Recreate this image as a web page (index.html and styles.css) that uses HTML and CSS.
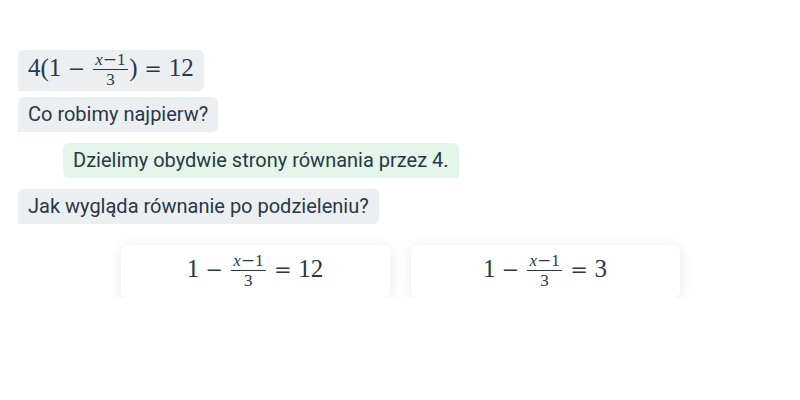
FILE: index.html
```html
<!DOCTYPE html>
<html lang="pl">
<head>
  <meta charset="UTF-8">
  <title>Równanie</title>
  <link rel="stylesheet" href="styles.css">
</head>
<body>
  <div class="chat">
    <div class="bubble bot math-bubble">
      <span class="math">4(1<span class="bin">&minus;</span><span class="frac"><span class="num"><i>x</i><span class="op">&minus;</span>1</span><span class="den">3</span></span>)<span class="rel">=</span>12</span>
    </div>
    <div class="bubble bot">Co robimy najpierw?</div>
    <div class="bubble user">Dzielimy obydwie strony równania przez 4.</div>
    <div class="bubble bot">Jak wygląda równanie po podzieleniu?</div>
  </div>

  <div class="choices">
    <div class="choice">
      <span class="math">1<span class="bin">&minus;</span><span class="frac"><span class="num"><i>x</i><span class="op">&minus;</span>1</span><span class="den">3</span></span><span class="rel">=</span>12</span>
    </div>
    <div class="choice">
      <span class="math">1<span class="bin">&minus;</span><span class="frac"><span class="num"><i>x</i><span class="op">&minus;</span>1</span><span class="den">3</span></span><span class="rel">=</span>3</span>
    </div>
  </div>
</body>
</html>
```

FILE: styles.css
```css
body {
  margin: 0;
  font-family: Roboto, "Noto Sans", sans-serif;
  color: #283848;
  background: #fff;
}
.chat {
  display: flex;
  flex-direction: column;
  align-items: flex-start;
  padding: 50px 18px 0;
}
.bubble {
  font-size: 20px;
  line-height: 23px;
  padding: 6px 10px;
  margin-bottom: 11px;
}
.bot {
  background: #eceff1;
  border-radius: 6px 6px 6px 0;
}
.user {
  background: #e4f6ea;
  border-radius: 6px 6px 0 6px;
  margin-left: 45px;
}
.math-bubble {
  padding: 0 10px;
  height: 41px;
  display: flex;
  align-items: center;
  margin-bottom: 6px;
}
.math {
  font-family: "Liberation Serif", "DejaVu Serif", serif;
  font-size: 25px;
  line-height: 1;
  white-space: nowrap;
}
.bin, .rel, .op {
  font-family: "DejaVu Serif", serif;
  font-size: 0.84em;
}
.bin {
  margin: 0 0.3em;
}
.rel {
  margin: 0 0.32em;
}
.frac {
  display: inline-flex;
  flex-direction: column;
  align-items: center;
  vertical-align: middle;
  font-size: 0.68em;
  line-height: 1;
  margin: -2px 0.1em 0;
}
.frac .op {
  font-size: 1em;
}
.frac .num {
  border-bottom: 1px solid #283848;
  padding: 0 0.12em 1px;
}
.frac .den {
  padding-top: 1px;
}
.choices {
  display: flex;
  justify-content: center;
  gap: 21px;
  margin-top: 10px;
}
.choice {
  width: 269px;
  height: 53px;
  background: #fff;
  border-radius: 7px;
  box-shadow: 0 2px 14px rgba(0, 0, 0, 0.09);
  display: flex;
  align-items: center;
  justify-content: center;
}
```
